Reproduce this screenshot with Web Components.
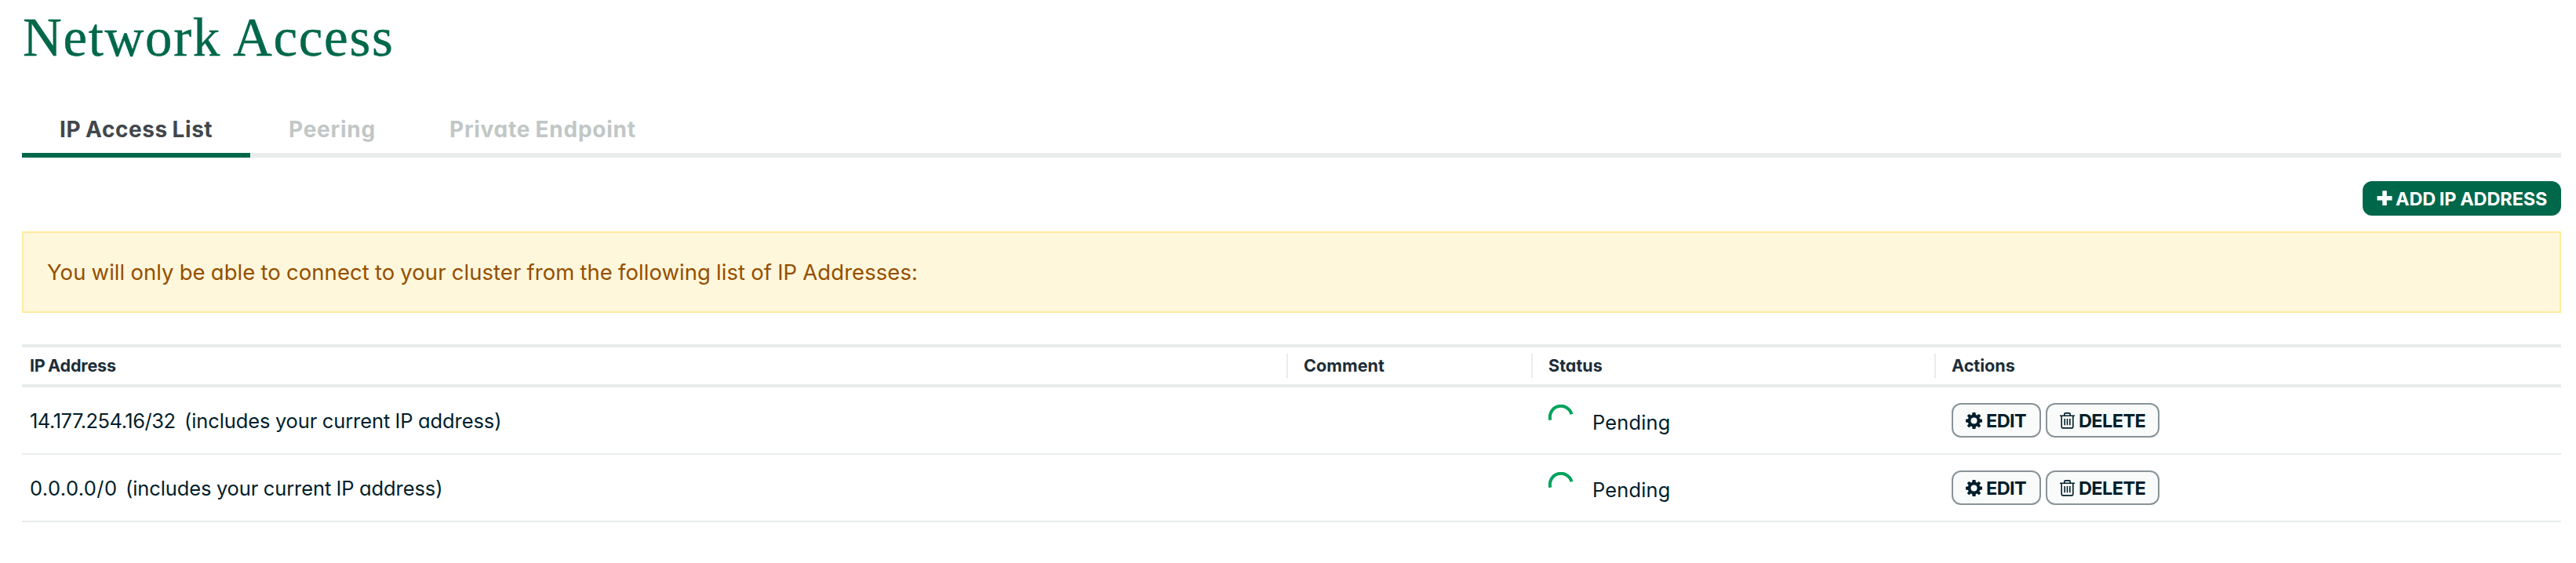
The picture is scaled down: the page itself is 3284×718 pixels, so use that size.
<!DOCTYPE html>
<html lang="en"><head><meta charset="utf-8"><title>Network Access</title>
<style>
html,body{margin:0;background:#fff}
body{font-family:Inter,"Liberation Sans",sans-serif;font-feature-settings:"cv11";color:#001e2b;-webkit-font-smoothing:antialiased}
</style></head><body>
<network-access-page></network-access-page>
<script>
const define = (name, html) => customElements.define(name, class extends HTMLElement {
  constructor() {
    super();
    const t = document.createElement('template');
    t.innerHTML = html;
    this.attachShadow({ mode: 'open' }).append(t.content.cloneNode(true));
  }
});

define('page-title', `<style>
:host{display:block;height:96px;line-height:96px;font-family:"Liberation Serif",serif;font-size:69px;letter-spacing:1.65px;word-spacing:0;padding-left:1px;color:#00684a;-webkit-text-stroke:.4px #00684a;white-space:nowrap}
h1{margin:0;font:inherit}
</style><h1><slot></slot></h1>`);

define('tab-item', `<style>
:host{display:block;box-sizing:border-box;height:67px;line-height:62px;padding-left:49px;font-size:28px;font-weight:700;letter-spacing:.75px;word-spacing:-1px;color:#c1c7c6;white-space:nowrap;border-bottom:6px solid #e8edeb}
:host([active]){color:#41474d;border-color:#00684a;letter-spacing:.55px;word-spacing:-1.200px;padding-left:48px}
</style><slot></slot>`);

define('tab-bar', `<style>
:host{display:grid;grid-template-columns:291px 205px 1fr;margin-top:38px}
</style><slot></slot>`);

define('action-button', `<style>
:host{display:flex;align-items:center;box-sizing:border-box;height:44px;border:2px solid #889397;border-radius:12px;background:#f9fbfa;color:#001e2b;font-size:23.5px;font-weight:700;line-height:41px;white-space:nowrap;padding-left:16px;letter-spacing:-.6px}
:host([primary]){background:#00684a;border-color:#00684a;color:#fff;letter-spacing:-.1px;word-spacing:-.8px}
</style><slot name="icon"></slot><slot></slot>`);

define('tool-bar', `<style>:host{display:flex;justify-content:flex-end;margin:30px 0 20px}</style><slot></slot>`);

define('alert-banner', `<style>
:host{display:block;box-sizing:border-box;height:104px;border:2px solid #ffec9e;background:#fef7db;color:#944f01;line-height:100px;padding-left:30px;font-size:27.5px;letter-spacing:.06px;word-spacing:-.7px;white-space:nowrap}
</style><slot></slot>`);

define('data-table', `<style>:host{display:block;margin-top:40px}</style><slot></slot>`);

define('table-head', `<style>
:host{display:grid;grid-template-columns:1612px 312px 514px 1fr;box-sizing:border-box;height:55px;border-top:4px solid #e8edeb;border-bottom:4px solid #e8edeb;align-items:center;font-size:21.6px;font-weight:700;color:#1c2d38}
</style><slot></slot>`);

define('head-cell', `<style>
:host{display:block;box-sizing:border-box;height:31px;line-height:31px;border-left:2px solid #e8edeb;padding-left:20px;white-space:nowrap}
:host([first]){border:0;padding-left:10px;letter-spacing:-.2px;word-spacing:-1.500px}
</style><slot></slot>`);

define('gear-icon', `<style>:host{display:block;width:21px;height:21px;margin-right:5px}svg{display:block}</style>
<svg width="21" height="21" viewBox="0 0 21 21"><path fill="currentColor" fill-rule="evenodd" d="M8.6 0h3.8l.5 3 1.500.6L16.900 1.900l2.300 2.300-1.800 2.500.6 1.500 3 .5v3.800l-3 .5-.6 1.500 1.800 2.500-2.300 2.300-2.500-1.800-1.500.6-.5 3H8.600l-.5-3-1.500-.6-2.500 1.800-2.300-2.300 1.800-2.500L3 13l-3-.5V8.700l3-.5.600-1.500-1.800-2.500 2.300-2.300 2.500 1.700 1.500-.6zM10.500 6.500a4 4 0 1 0 0 8 4 4 0 1 0 0-8z"/></svg>`);

define('trash-icon', `<style>:host{display:block;width:19px;height:21px;margin-right:5px}svg{display:block}</style>
<svg width="19" height="21" viewBox="0 0 19 21" fill="none" stroke="currentColor" stroke-width="1.6"><path d="M0 4.300h19M5.800 4V2.300Q5.800.9 7.200.9h4.600q1.400 0 1.400 1.400V4M2.200 4.500v13.400q0 2 2 2h10.600q2 0 2-2V4.500M6.200 8v8.200M9.500 8v8.200M12.800 8v8.200"/></svg>`);

define('plus-icon', `<style>:host{display:block;width:20px;height:20px;margin-right:4px}svg{display:block}</style>
<svg width="20" height="20" viewBox="0 0 20 20"><path fill="none" stroke="currentColor" stroke-width="5.600" d="M10 .3v18.800M.5 9.700h19"/></svg>`);

define('status-spinner', `<style>:host{display:block;width:32px;height:32px}svg{display:block}</style>
<svg width="32" height="32" viewBox="0 0 32 32"><path fill="none" stroke="#00a35c" stroke-width="4" d="M2.500 19.700A14 14 0 1 1 29.500 12.300"/></svg>`);

define('access-row', `<style>
:host{display:grid;grid-template-columns:1612px 312px 514px 1fr;box-sizing:border-box;height:86px;border-bottom:2px solid #e8edeb;font-size:25.5px;line-height:86px;white-space:nowrap}
.ip{display:flex;padding-left:10px}
.ip span{letter-spacing:-.1px;word-spacing:-.6px}
.status{display:flex;padding-left:22px;gap:24px;align-items:flex-start;letter-spacing:.15px}
status-spinner{margin-top:22px}
.status span{line-height:89px}
.actions{display:flex;gap:6px;padding:20px 0 0 22px}
.edit{width:114px}.del{width:145px}
</style>
<div class="ip"><slot name="ip"></slot><span>(includes your current IP address)</span></div>
<div></div>
<div class="status"><status-spinner></status-spinner><span>Pending</span></div>
<div class="actions"><action-button class="edit"><gear-icon slot="icon"></gear-icon>EDIT</action-button><action-button class="del"><trash-icon slot="icon"></trash-icon>DELETE</action-button></div>`);

define('network-access-page', `<style>
:host{display:block;box-sizing:border-box;width:3284px;height:718px;padding:0 19px 0 28px;overflow:hidden}
.add{width:253px}
.a{width:197px;letter-spacing:-.5px}
.b{width:122px;letter-spacing:.4px}
</style>
<page-title>Network Access</page-title>
<tab-bar><tab-item active>IP Access List</tab-item><tab-item>Peering</tab-item><tab-item>Private Endpoint</tab-item></tab-bar>
<tool-bar><action-button primary class="add"><plus-icon slot="icon"></plus-icon>ADD IP ADDRESS</action-button></tool-bar>
<alert-banner>You will only be able to connect to your cluster from the following list of IP Addresses:</alert-banner>
<data-table>
<table-head><head-cell first>IP Address</head-cell><head-cell>Comment</head-cell><head-cell>Status</head-cell><head-cell>Actions</head-cell></table-head>
<access-row><span slot="ip" class="a">14.177.254.16/32</span></access-row>
<access-row><span slot="ip" class="b">0.0.0.0/0</span></access-row>
</data-table>`);
</script></body></html>
